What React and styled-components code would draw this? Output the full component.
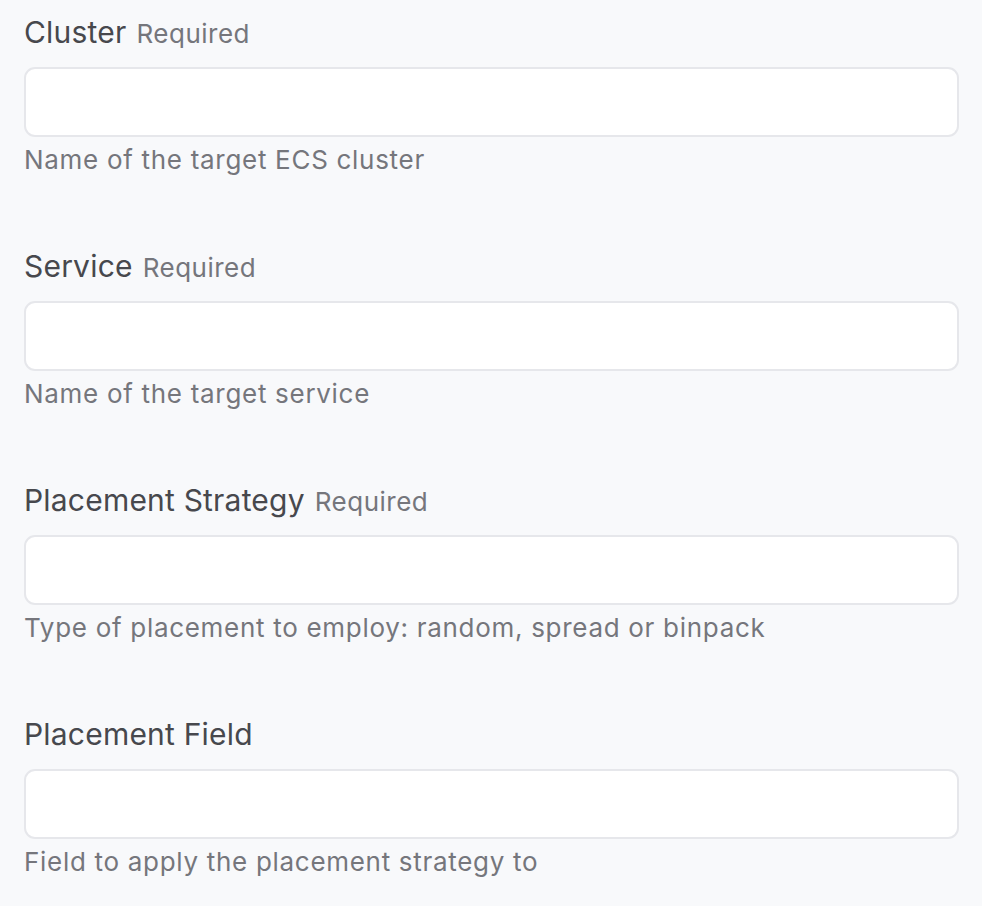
import React from 'react'
import styled, { createGlobalStyle } from 'styled-components'

const GlobalStyle = createGlobalStyle`
    html, body {
        margin: 0;
        padding: 0;
        background-color: #f8f9fb;
    }
    body {
        font-family: Inter, "Noto Sans", "Liberation Sans", sans-serif;
        -webkit-font-smoothing: antialiased;
    }
`

const fields = [
    { label: 'Cluster', required: true, help: 'Name of the target ECS cluster' },
    { label: 'Service', required: true, help: 'Name of the target service' },
    { label: 'Placement Strategy', required: true, help: 'Type of placement to employ: random, spread or binpack' },
    { label: 'Placement Field', required: false, help: 'Field to apply the placement strategy to' },
]

const App = () => {
    return (
        <>
            <GlobalStyle />
            <Form>
                {fields.map((f) => (
                    <Field key={f.label}>
                        <Label>
                            {f.label}
                            {f.required && <Required>Required</Required>}
                        </Label>
                        <Input type="text" />
                        <Help>{f.help}</Help>
                    </Field>
                ))}
            </Form>
        </>
    )
}

export default App

const Form = styled.form`
    padding: 14px 24px 0;
    display: flex;
    flex-direction: column;
    gap: 70px;
`

const Field = styled.div`
    display: flex;
    flex-direction: column;
`

const Label = styled.label`
    display: flex;
    align-items: baseline;
    gap: 10px;
    height: 36px;
    font-size: 30px;
    line-height: 36px;
    letter-spacing: 0.2px;
    color: #47484d;
    margin-bottom: 17px;
`

const Required = styled.span`
    font-size: 26px;
    letter-spacing: 0.5px;
    color: #75767c;
`

const Input = styled.input`
    box-sizing: border-box;
    width: 935px;
    height: 70px;
    margin: 0;
    border: 2px solid #e6e7eb;
    border-radius: 11px;
    background-color: #fff;
    outline: none;
    padding: 0 16px;
    font-size: 24px;
    font-family: inherit;
`

const Help = styled.p`
    margin: 5px 0 0;
    height: 36px;
    font-size: 26px;
    line-height: 36px;
    letter-spacing: 0.7px;
    color: #75767c;
`
